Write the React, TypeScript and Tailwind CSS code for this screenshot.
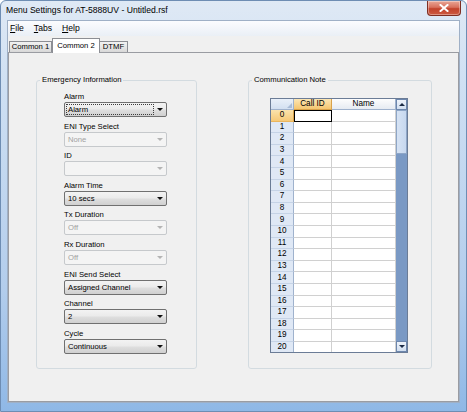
import React from 'react';
import clsx from 'clsx';

type Field = { label: string; value: string; disabled?: boolean; focused?: boolean };

const fields: Field[] = [
  { label: 'Alarm', value: 'Alarm', focused: true },
  { label: 'ENI Type Select', value: 'None', disabled: true },
  { label: 'ID', value: '', disabled: true },
  { label: 'Alarm Time', value: '10 secs' },
  { label: 'Tx Duration', value: 'Off', disabled: true },
  { label: 'Rx Duration', value: 'Off', disabled: true },
  { label: 'ENI Send Select', value: 'Assigned Channel' },
  { label: 'Channel', value: '2' },
  { label: 'Cycle', value: 'Continuous' },
];

const rows = Array.from({ length: 21 }, (_, i) => i);

const Tri = ({ up, color }: { up?: boolean; color: string }) => (
  <svg width="6" height="3" viewBox="0 0 6 3">
    <path d={up ? 'M0 3H6L3 0Z' : 'M0 0H6L3 3Z'} fill={color} />
  </svg>
);

const Combo: React.FC<{ field: Field }> = ({ field }) => (
  <div
    className={clsx(
      'flex h-[15px] w-[103px] items-center rounded-[2px] border pr-[3px]',
      field.disabled
        ? 'border-[#c6c9cc] bg-[#f4f4f4] text-[#a2a2a2]'
        : 'border-[#707070] bg-[linear-gradient(#f3f3f3,#ebebeb_45%,#dedede_55%,#d0d0d0)] text-black'
    )}
  >
    {field.focused ? (
      <span className="ml-[1px] flex h-[11px] w-[88px] items-center border border-dotted border-[#3c3c3c] pl-[1px] leading-[9px]">
        {field.value}
      </span>
    ) : (
      <span className="pl-[3px] leading-[13px]">{field.value}</span>
    )}
    <span className="ml-auto flex">
      <Tri color={field.disabled ? '#b4b4b4' : '#111'} />
    </span>
  </div>
);

const GridRow: React.FC<{ n: number }> = ({ n }) => (
  <div className="flex h-[11.6px] shrink-0">
    <div
      className={clsx(
        'flex w-[23px] items-center justify-center border-b border-r leading-none',
        n === 0
          ? 'border-b-[#e9b55d] border-r-[#d9a24a] bg-[linear-gradient(#fbe3ad,#f6c977)]'
          : 'border-b-[#c5d3e6] border-r-[#9fb2cd] bg-[#dfe8f5]'
      )}
    >
      {n}
    </div>
    {n === 0 ? (
      <div className="w-[38px] border-[1.5px] border-black bg-white" />
    ) : (
      <div className="w-[38px] border-b border-r border-[#d0d0d0] bg-white" />
    )}
    <div className="w-[64px] border-b border-r border-[#d0d0d0] bg-white" />
  </div>
);

export default function App() {
  return (
    <div className="h-[412px] w-[467px] bg-white font-['Liberation_Sans',Arial,sans-serif] text-[7.7px] text-black">
      <div className="flex h-full w-full flex-col overflow-hidden rounded-t-[6px] border border-[#6e8db3] bg-[linear-gradient(#dfe9f5,#cfe0f3_20%,#b3cdec_70%,#8fb8e6)]">
        {/* title bar */}
        <div className="flex h-[19px] shrink-0 items-start justify-between">
          <span className="pl-[5px] pt-[3px] text-[8.6px] leading-[12px]">
            Menu Settings for AT-5888UV - Untitled.rsf
          </span>
          <div className="mr-[5px] flex h-[15px] w-[34px] items-center justify-center rounded-b-[4px] border border-t-0 border-[#7e2e22] bg-[linear-gradient(#e9a797,#d8715d_45%,#c2432c_55%,#cc5a40)] shadow-[inset_0_0_0_1px_rgba(255,255,255,0.35)]">
            <svg width="10" height="8" viewBox="0 0 10 8">
              <path d="M1.5 1L8.5 7M8.5 1L1.5 7" stroke="#fff" strokeWidth="2" strokeLinecap="square" />
            </svg>
          </div>
        </div>

        {/* client area */}
        <div className="mx-[6px] mb-[8px] flex flex-1 flex-col border border-[#9fb0c6] bg-[#f0f0f0]">
          <div className="flex h-[15px] shrink-0 items-center gap-[10px] bg-[linear-gradient(#fbfcfe,#eaeff6)] pl-[2px] text-[8.6px]">
            <span>
              <u>F</u>ile
            </span>
            <span>
              <u>T</u>abs
            </span>
            <span>
              <u>H</u>elp
            </span>
          </div>

          {/* tab strip */}
          <div className="flex h-[16px] shrink-0 items-end pl-[1px]">
            <div className="flex h-[11px] w-[43px] items-center justify-center border border-b-0 border-[#8c8e94] bg-[linear-gradient(#f2f2f2,#e6e6e6_50%,#d8d8d8)]">
              Common 1
            </div>
            <div className="relative z-10 -mb-[1px] flex h-[15px] w-[48px] items-center justify-center border border-b-0 border-[#8c8e94] bg-white pb-[1px]">
              Common 2
            </div>
            <div className="flex h-[11px] w-[28px] items-center justify-center border border-b-0 border-l-0 border-[#8c8e94] bg-[linear-gradient(#f2f2f2,#e6e6e6_50%,#d8d8d8)]">
              DTMF
            </div>
          </div>

          {/* tab page */}
          <div className="flex flex-1 items-start border border-[#9a9ca2] bg-[#f0f0f0] pl-[27px] pt-[22px]">
            <fieldset className="h-[294px] w-[161px] rounded-[3px] border border-[#d3dbe0]">
              <legend className="ml-[3px] px-[2px] leading-[10px]">Emergency Information</legend>
              <div className="flex flex-col gap-y-[3.6px] pl-[27px] pt-[6px]">
                {fields.map((f) => (
                  <div key={f.label} className="flex flex-col">
                    <span className="h-[11px] leading-[11px]">{f.label}</span>
                    <Combo field={f} />
                  </div>
                ))}
              </div>
            </fieldset>

            <fieldset className="ml-[51px] h-[294px] w-[184px] rounded-[3px] border border-[#d3dbe0]">
              <legend className="ml-[3px] px-[2px] leading-[10px]">Communication Note</legend>
              <div className="pl-[21px] pt-[13px] text-[8.2px]">
                <div className="flex h-[255px] w-[138px] overflow-hidden border border-[#6b7c96]">
                  <div className="flex w-[125px] flex-col overflow-hidden">
                    <div className="flex h-[11px] shrink-0">
                      <div className="flex w-[23px] items-end justify-end border-b border-r border-[#9fb2cd] bg-[linear-gradient(#e9f0f9,#d3e0f1)] p-[1px]">
                        <svg width="5" height="5" viewBox="0 0 5 5">
                          <path d="M5 0V5H0Z" fill="#a9bcd6" />
                        </svg>
                      </div>
                      <div className="flex w-[38px] items-center justify-center border-b border-r border-[#d9a24a] bg-[linear-gradient(#fce6b4,#f5c670)]">
                        Call ID
                      </div>
                      <div className="flex w-[64px] items-center justify-center border-b border-r border-[#9fb2cd] bg-[linear-gradient(#fdfdfd,#e6ebf2)]">
                        Name
                      </div>
                    </div>
                    {rows.map((n) => (
                      <GridRow key={n} n={n} />
                    ))}
                  </div>
                  {/* scrollbar */}
                  <div className="flex w-[11px] flex-col bg-[#7a99c4]">
                    <div className="flex h-[11px] shrink-0 items-center justify-center border border-[#6d87ad] bg-[linear-gradient(#eef3fa,#d2dff0)]">
                      <Tri up color="#1b2b44" />
                    </div>
                    <div className="h-[44px] shrink-0 border border-[#8ea6c7] bg-[linear-gradient(90deg,#d6e3f4,#c7d8ef)]" />
                    <div className="flex-1" />
                    <div className="flex h-[11px] shrink-0 items-center justify-center border border-[#6d87ad] bg-[linear-gradient(#eef3fa,#d2dff0)]">
                      <Tri color="#1b2b44" />
                    </div>
                  </div>
                </div>
              </div>
            </fieldset>
          </div>
        </div>
      </div>
    </div>
  );
}
